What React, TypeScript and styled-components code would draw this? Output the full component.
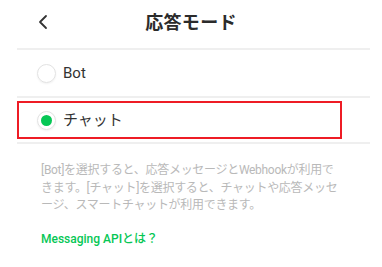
import styled, { createGlobalStyle } from "styled-components";

const GlobalStyle = createGlobalStyle`
  body {
    margin: 0;
    background: #ffffff;
    font-family: "Roboto", "Noto Sans CJK JP", sans-serif;
  }
`;

const Page = styled.div`
  width: 382px;
  height: 267px;
  overflow: hidden;
  background: #ffffff;
`;

const Header = styled.header`
  position: relative;
  height: 48px;
  display: flex;
  align-items: center;
  justify-content: center;
`;

const BackButton = styled.button`
  position: absolute;
  left: 34px;
  top: 13px;
  width: 18px;
  height: 18px;
  padding: 0;
  border: none;
  background: none;
  display: flex;
  align-items: center;
  justify-content: center;
`;

const Title = styled.h1`
  margin: 0;
  margin-top: -6px;
  font-size: 18px;
  font-weight: 700;
  color: #2b2b2b;
  letter-spacing: 0.3px;
`;

const Divider = styled.div`
  height: 2px;
  background: #efefef;
  margin: 0 12px 0 17px;
`;

const OptionRow = styled.label<{ $boxed?: boolean }>`
  display: flex;
  align-items: center;
  gap: 7px;
  box-sizing: border-box;
  height: ${(p) => (p.$boxed ? "38px" : "46px")};
  width: ${(p) => (p.$boxed ? "325px" : "auto")};
  margin: ${(p) => (p.$boxed ? "3px 0 3px 17px" : "0")};
  padding-left: ${(p) => (p.$boxed ? "18px" : "37px")};
  border: ${(p) => (p.$boxed ? "2px solid #ee1c25" : "none")};
  font-size: 15px;
  color: #333333;
`;

const Radio = styled.span<{ $checked?: boolean }>`
  width: 19px;
  height: 19px;
  border-radius: 50%;
  box-sizing: border-box;
  border: 1px solid #e2e2e2;
  box-shadow: 0 1px 2px rgba(0, 0, 0, 0.06);
  display: flex;
  align-items: center;
  justify-content: center;
  margin-top: 1px;
  &::after {
    content: "";
    width: 11px;
    height: 11px;
    border-radius: 50%;
    background: ${(p) => (p.$checked ? "#06c755" : "transparent")};
  }
`;

const OptionText = styled.span`
  line-height: 1;
`;

const Description = styled.p`
  margin: 18px 0 0 41px;
  font-size: 12px;
  line-height: 17.5px;
  color: #b9b9b9;
  white-space: nowrap;
  letter-spacing: -0.3px;
`;

const HelpLink = styled.a`
  display: block;
  margin: 16px 0 0 41px;
  font-size: 12px;
  line-height: 16px;
  font-weight: 500;
  color: #06c755;
  text-decoration: none;
`;

export default function App() {
  return (
    <Page>
      <GlobalStyle />
      <Header>
        <BackButton aria-label="戻る">
          <svg width="12" height="16" viewBox="0 0 12 16">
            <path
              d="M9 2 L3 8 L9 14"
              fill="none"
              stroke="#333"
              strokeWidth="1.8"
              strokeLinecap="round"
              strokeLinejoin="round"
            />
          </svg>
        </BackButton>
        <Title>応答モード</Title>
      </Header>
      <Divider />
      <OptionRow>
        <Radio />
        <OptionText>Bot</OptionText>
      </OptionRow>
      <Divider />
      <OptionRow $boxed>
        <Radio $checked />
        <OptionText>チャット</OptionText>
      </OptionRow>
      <Divider />
      <Description>
        [Bot]を選択すると、応答メッセージとWebhookが利用で
        <br />
        きます。[チャット]を選択すると、チャットや応答メッセ
        <br />
        ージ、スマートチャットが利用できます。
      </Description>
      <HelpLink href="#">Messaging APIとは？</HelpLink>
    </Page>
  );
}
